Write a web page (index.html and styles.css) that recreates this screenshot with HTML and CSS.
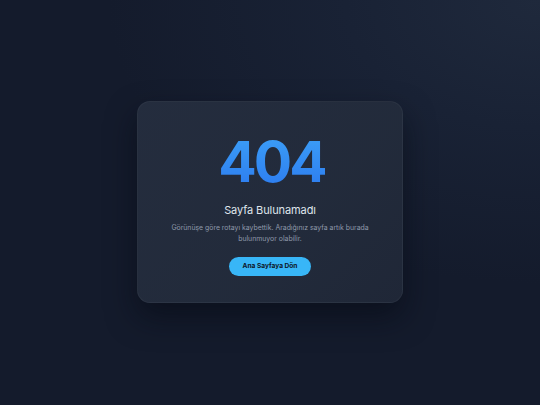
FILE: index.html
```html
<!DOCTYPE html>
<html lang="tr">
<head>
<meta charset="utf-8">
<title>404 - Sayfa Bulunamadı</title>
<link rel="stylesheet" href="styles.css">
</head>
<body>
<main class="page">
  <section class="card">
    <h1 class="code">404</h1>
    <h2 class="title">Sayfa Bulunamadı</h2>
    <p class="desc">Görünüşe göre rotayı kaybettik. Aradığınız sayfa artık burada bulunmuyor olabilir.</p>
    <a class="btn" href="#">Ana Sayfaya Dön</a>
  </section>
</main>
</body>
</html>
```

FILE: styles.css
```css
* { box-sizing: border-box; }
html, body { height: 100%; }
body {
  margin: 0;
  font-family: Inter, "Noto Sans", "Liberation Sans", sans-serif;
  background: radial-gradient(ellipse 80% 70% at 100% 0%, #1f293c 0%, #192235 45%, #141b2c 100%);
  color: #e2e8f0;
}
.page {
  min-height: 100%;
  display: flex;
  align-items: center;
  justify-content: center;
  padding-bottom: 2px;
}
.card {
  width: 266px;
  height: 202px;
  border-radius: 13px;
  background: linear-gradient(135deg, rgba(37,46,63,0.95) 0%, rgba(35,44,60,0.95) 60%, rgba(32,40,56,0.95) 100%);
  border: 1px solid rgba(255,255,255,0.04);
  box-shadow: 0 14px 30px rgba(5,9,18,0.55);
  display: flex;
  flex-direction: column;
  align-items: center;
  padding-top: 30px;
  text-align: center;
}
.code {
  margin: 0;
  padding-left: 3px;
  font-size: 57px;
  line-height: 60px;
  font-weight: 700;
  letter-spacing: -3px;
  background: linear-gradient(180deg, #3ca0f8 0%, #2c7aef 100%);
  -webkit-background-clip: text;
  background-clip: text;
  color: transparent;
}
.title {
  margin: 11px 0 0;
  font-size: 11px;
  line-height: 14px;
  font-weight: 400;
  letter-spacing: -0.1px;
  color: #dfe4ec;
}
.desc {
  margin: 5px 0 0;
  width: 204px;
  font-size: 6.9px;
  line-height: 11px;
  color: #8f99aa;
}
.btn {
  margin-top: 13px;
  width: 82px;
  height: 19px;
  border-radius: 10px;
  background: #38b6f7;
  color: #0d1526;
  font-size: 6.6px;
  font-weight: 700;
  line-height: 19px;
  text-decoration: none;
}
```
